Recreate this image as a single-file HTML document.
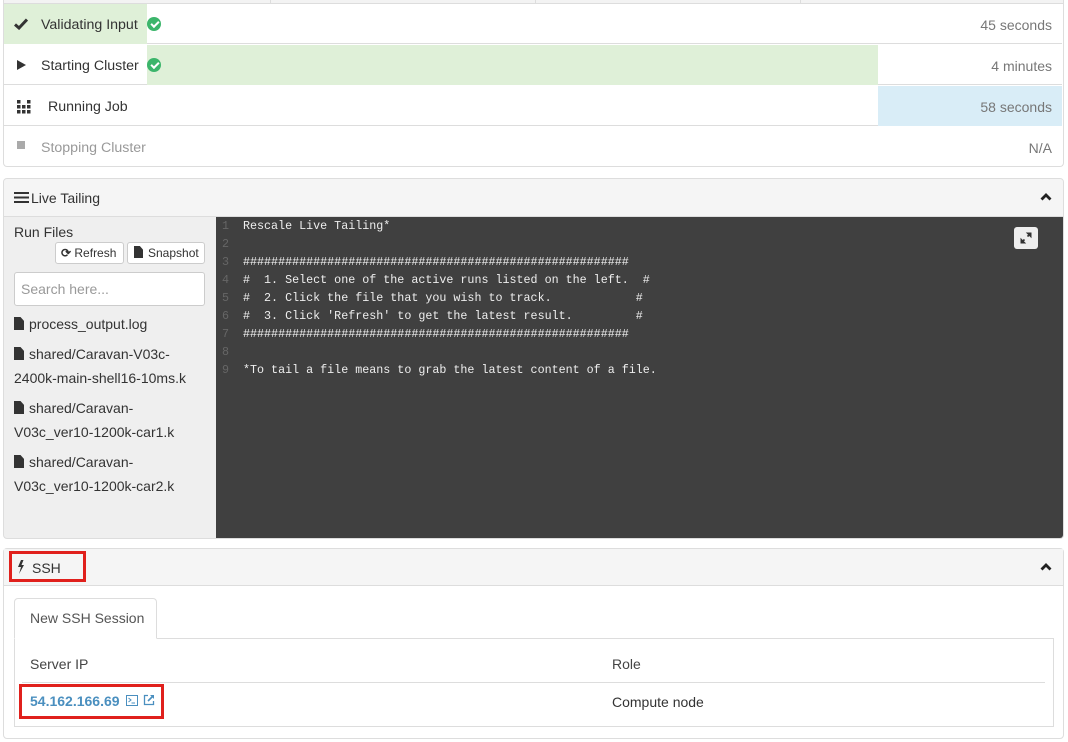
<!DOCTYPE html>
<html><head><style>
*{box-sizing:border-box;margin:0;padding:0}
body{width:1068px;height:742px;background:#fff;font-family:"Liberation Sans",sans-serif;color:#333;position:relative;overflow:hidden;font-size:13px}
.a{position:absolute}
.row{position:absolute;left:4px;width:1058px;height:40px;border-bottom:1px solid #ddd}
.row .t{position:absolute;top:13px;font-size:14.2px}
.row .r{position:absolute;right:10px;top:13px;color:#777;font-size:14px}
.chk{position:absolute;top:13px;width:14px;height:14px;border-radius:50%;background:#3cb56b}
.chk:after{content:"";position:absolute;left:3.5px;top:3.5px;width:6px;height:3px;border-left:2px solid #fff;border-bottom:2px solid #fff;transform:rotate(-45deg)}
.code{position:absolute;left:222px;top:217px;font-family:"Liberation Mono",monospace;font-size:11.7px;line-height:18px;color:#eee;white-space:pre}
.code span{color:#666;display:inline-block;width:21px}
.file{position:absolute;left:14px;font-size:14px;line-height:24px;color:#333}
.fi{display:inline-block;width:10px;height:13px;background:#333;margin-right:5px;vertical-align:-1px;clip-path:polygon(0 0,65% 0,100% 30%,100% 100%,0 100%)}
</style></head><body>
<div class="a" style="left:3px;top:0;width:1061px;height:4px;background:#f3f3f3;border:1px solid #ddd;border-top:none"></div>
<div class="a" style="left:270px;top:0;width:1px;height:3px;background:#ddd"></div>
<div class="a" style="left:535px;top:0;width:1px;height:3px;background:#ddd"></div>
<div class="a" style="left:800px;top:0;width:1px;height:3px;background:#ddd"></div>
<div class="a" style="left:3px;top:3px;width:1061px;height:164px;border:1px solid #ddd;border-top:none;border-radius:0 0 4px 4px"></div>
<div class="row" style="top:4px"><div class="a" style="left:0;top:0;width:143px;height:40px;background:#dff0d8"></div>
<svg class="a" style="left:10px;top:14px" width="14" height="12" viewBox="0 0 14 12"><path d="M1 6.5 L5 10 L13 1.5" stroke="#333" stroke-width="3" fill="none"/></svg><div class="t" style="left:37px">Validating Input</div><div class="chk" style="left:143px"></div><div class="r">45 seconds</div></div>
<div class="row" style="top:45px"><div class="a" style="left:143px;top:0;width:731px;height:40px;background:#dff0d8"></div>
<div class="a" style="left:13px;top:15px;width:0;height:0;border-left:9px solid #333;border-top:5px solid transparent;border-bottom:5px solid transparent"></div><div class="t" style="left:37px">Starting Cluster</div><div class="chk" style="left:143px"></div><div class="r">4 minutes</div></div>
<div class="row" style="top:86px"><div class="a" style="left:874px;top:0;width:184px;height:40px;background:#d9edf7"></div>
<svg class="a" style="left:13px;top:14px" width="14" height="14" viewBox="0 0 14 14" fill="#333"><rect x="0" y="0" width="3.5" height="3.5"/><rect x="10" y="0" width="3.5" height="3.5"/><rect x="0" y="5" width="3.5" height="3.5"/><rect x="5" y="5" width="3.5" height="3.5"/><rect x="10" y="5" width="3.5" height="3.5"/><rect x="0" y="10" width="3.5" height="3.5"/><rect x="5" y="10" width="3.5" height="3.5"/><rect x="10" y="10" width="3.5" height="3.5"/></svg>
<div class="t" style="left:44px">Running Job</div><div class="r" style="color:#777">58 seconds</div></div>
<div class="row" style="top:127px;border:none"><div class="a" style="left:13px;top:14px;width:8px;height:8px;background:#aaa"></div><div class="t" style="left:37px;color:#999">Stopping Cluster</div><div class="r">N/A</div></div>

<div class="a" style="left:3px;top:178px;width:1061px;height:361px;border:1px solid #ddd;border-radius:4px;background:#efefef;overflow:hidden">
<div class="a" style="left:0;top:0;width:1059px;height:38px;background:#f5f5f5;border-bottom:1px solid #ddd"></div>
<div class="a" style="left:212px;top:38px;width:847px;height:322px;background:#404040"></div>
</div>
<svg class="a" style="left:14px;top:192px" width="15" height="11" viewBox="0 0 15 11" fill="#333"><rect y="0" width="15" height="2"/><rect y="4.5" width="15" height="2"/><rect y="9" width="15" height="2"/></svg>
<div class="a" style="left:31px;top:190px;font-size:14px">Live Tailing</div>
<svg class="a" style="left:1040px;top:193px" width="12" height="8" viewBox="0 0 12 8"><path d="M1.5 6.5 L6 2 L10.5 6.5" stroke="#222" stroke-width="2.8" fill="none"/></svg>
<div class="a" style="left:14px;top:224px;font-size:14px">Run Files</div>
<div class="a" style="left:55px;top:242px;width:69px;height:22px;background:#fff;border:1px solid #ccc;border-radius:3px;font-size:12px;padding:3px 0 0 5px;font-weight:bold">⟳ <span style="font-weight:normal">Refresh</span></div>
<div class="a" style="left:127px;top:242px;width:78px;height:22px;background:#fff;border:1px solid #ccc;border-radius:3px;font-size:12px;padding:3px 0 0 6px"><span class="fi" style="width:9px;height:12px"></span>Snapshot</div>
<div class="a" style="left:14px;top:272px;width:191px;height:34px;background:#fff;border:1px solid #ccc;border-radius:3px;font-size:14px;color:#999;padding:8px 0 0 6px">Search here...</div>
<div class="file" style="top:312px"><span class="fi"></span>process_output.log</div>
<div class="file" style="top:342px"><span class="fi"></span>shared/Caravan-V03c-<br>2400k-main-shell16-10ms.k</div>
<div class="file" style="top:396px"><span class="fi"></span>shared/Caravan-<br>V03c_ver10-1200k-car1.k</div>
<div class="file" style="top:450px"><span class="fi"></span>shared/Caravan-<br>V03c_ver10-1200k-car2.k</div>
<div class="code"><span>1</span>Rescale Live Tailing*
<span>2</span>
<span>3</span>#######################################################
<span>4</span>#  1. Select one of the active runs listed on the left.  #
<span>5</span>#  2. Click the file that you wish to track.            #
<span>6</span>#  3. Click 'Refresh' to get the latest result.         #
<span>7</span>#######################################################
<span>8</span>
<span>9</span>*To tail a file means to grab the latest content of a file.</div>
<div class="a" style="left:1014px;top:227px;width:24px;height:22px;background:#eee;border-radius:3px"></div>
<svg class="a" style="left:1019px;top:231px" width="14" height="14" viewBox="0 0 14 14"><path d="M8 2 H12 V6 Z M6 12 H2 V8 Z" fill="#333" stroke="#333" stroke-width="1"/><path d="M11 3 L8.5 5.5 M3 11 L5.5 8.5" stroke="#333" stroke-width="1.6"/></svg>

<div class="a" style="left:3px;top:548px;width:1061px;height:191px;border:1px solid #ddd;border-radius:4px"></div>
<div class="a" style="left:4px;top:549px;width:1059px;height:37px;background:#f5f5f5;border-bottom:1px solid #ddd"></div>
<div class="a" style="left:9px;top:551px;width:77px;height:31px;border:3px solid #e0201c"></div>
<svg class="a" style="left:17px;top:560px" width="8" height="14" viewBox="0 0 8 14"><path d="M4 0 L1 7 H4 L2 14 L7 5 H4.5 L6.5 0 Z" fill="#333"/></svg>
<div class="a" style="left:32px;top:560px;font-size:14px">SSH</div>
<svg class="a" style="left:1040px;top:563px" width="12" height="8" viewBox="0 0 12 8"><path d="M1.5 6.5 L6 2 L10.5 6.5" stroke="#222" stroke-width="2.8" fill="none"/></svg>
<div class="a" style="left:14px;top:638px;width:1040px;height:89px;border:1px solid #ddd"></div>
<div class="a" style="left:14px;top:598px;width:143px;height:41px;border:1px solid #ddd;border-bottom:1px solid #fff;border-radius:4px 4px 0 0;background:#fff;font-size:14px;color:#555;padding:11px 0 0 15px">New SSH Session</div>
<div class="a" style="left:30px;top:656px;font-size:14px;color:#444">Server IP</div>
<div class="a" style="left:612px;top:656px;font-size:14px;color:#444">Role</div>
<div class="a" style="left:22px;top:682px;width:1023px;height:1px;background:#ddd"></div>
<div class="a" style="left:19px;top:684px;width:145px;height:35px;border:3px solid #e0201c"></div>
<div class="a" style="left:30px;top:693px;font-size:14px;color:#4a8fbf;font-weight:bold">54.162.166.69</div>
<svg class="a" style="left:126px;top:695px" width="12" height="11" viewBox="0 0 12 11"><rect x="0.5" y="0.5" width="11" height="10" fill="none" stroke="#4a8fbf"/><path d="M2.5 3 L5 5 L2.5 7 M5.5 8 H9" stroke="#4a8fbf" fill="none"/></svg>
<svg class="a" style="left:143px;top:694px" width="12" height="12" viewBox="0 0 12 12"><path d="M5 1.5 H1.5 V10.5 H10.5 V7" stroke="#4a8fbf" fill="none" stroke-width="1.3"/><path d="M7 1 H11 V5 Z" fill="#4a8fbf"/><path d="M10 2 L5 7" stroke="#4a8fbf" stroke-width="1.6"/></svg>
<div class="a" style="left:612px;top:694px;font-size:14px">Compute node</div>
</body></html>
